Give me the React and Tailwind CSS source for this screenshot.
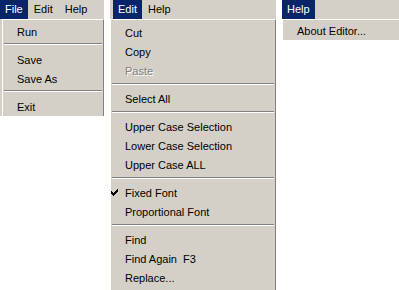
import React from "react";

const font = { fontFamily: '"Liberation Sans", Arial, sans-serif' };

function Item({ children, disabled, checked, pl = "pl-[14px]" }) {
  return (
    <div className={"relative h-[19px] flex items-center whitespace-nowrap pt-[1px] " + pl}>
      {checked && (
        <svg className="absolute left-[0px] top-[6px]" width="7" height="7" viewBox="0 0 7 7" shapeRendering="crispEdges">
          <path d="M0 2h1v3H0zM1 3h1v3H1zM2 4h1v3H2zM3 3h1v3H3zM4 2h1v3H4zM5 1h1v3H5zM6 0h1v3H6z" fill="#000" />
        </svg>
      )}
      {disabled ? (
        <span className="text-[#808080] [text-shadow:1px_1px_0_#ffffff]">{children}</span>
      ) : (
        <span className="text-black">{children}</span>
      )}
    </div>
  );
}

function Sep({ pt = "pt-[3px]" }) {
  return (
    <div className={"h-[9px] px-[1px] " + pt}>
      <div className="h-[1px] bg-[#808080]" />
      <div className="h-[1px] bg-white" />
    </div>
  );
}

function Bar({ items, pl = "" }) {
  return (
    <div className={"h-[19px] flex items-stretch " + pl}>
      {items.map((it, i) => (
        <div
          key={i}
          className={
            "flex items-center px-[5px] " +
            (i === 0 ? "bg-[#0a246a] text-white mr-[1px]" : "text-black mr-[2px]")
          }
        >
          {it}
        </div>
      ))}
    </div>
  );
}

export default function App() {
  return (
    <div className="w-[399px] h-[290px] bg-white overflow-hidden flex items-start text-[11px] leading-none" style={font}>
      <div className="w-[104px] bg-[#d4d0c8]">
        <Bar items={["File", "Edit", "Help"]} />
        <div className="ml-[2px] border-t border-l border-white border-r border-r-[#808080] pt-[2px]">
          <Item>Run</Item>
          <Sep pt="pt-[2px]" />
          <Item>Save</Item>
          <Item>Save As</Item>
          <Sep pt="pt-[2px]" />
          <Item>Exit</Item>
        </div>
      </div>
      <div className="ml-[6px] w-[166px] bg-[#d4d0c8] h-[290px]">
        <Bar items={["Edit", "Help"]} pl="pl-[3px]" />
        <div className="border-t border-l border-white border-r border-r-[#808080] pt-[3px] h-[271px]">
          <Item pl="pl-[14px]">Cut</Item>
          <Item pl="pl-[14px]">Copy</Item>
          <Item pl="pl-[14px]" disabled>Paste</Item>
          <Sep />
          <Item pl="pl-[14px]">Select All</Item>
          <Sep />
          <Item pl="pl-[14px]">Upper Case Selection</Item>
          <Item pl="pl-[14px]">Lower Case Selection</Item>
          <Item pl="pl-[14px]">Upper Case ALL</Item>
          <Sep />
          <Item pl="pl-[14px]" checked>Fixed Font</Item>
          <Item pl="pl-[14px]">Proportional Font</Item>
          <Sep />
          <Item pl="pl-[14px]">Find</Item>
          <Item pl="pl-[14px]">Find Again&nbsp;&nbsp;F3</Item>
          <Item pl="pl-[14px]">Replace...</Item>
        </div>
      </div>
      <div className="ml-[6px] flex-1 bg-[#d4d0c8]">
        <Bar items={["Help"]} />
        <div className="border-t border-l border-white pt-[1px]">
          <Item>About Editor...</Item>
        </div>
      </div>
    </div>
  );
}
